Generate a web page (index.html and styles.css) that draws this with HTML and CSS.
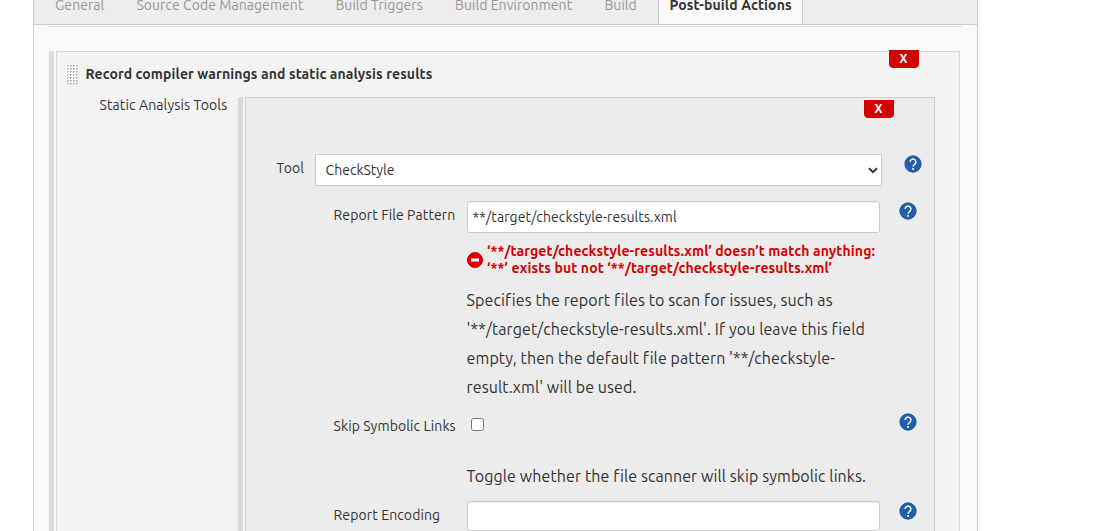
FILE: index.html
```html
<!DOCTYPE html>
<html lang="en">
<head>
<meta charset="utf-8">
<title>Post-build Actions</title>
<link rel="stylesheet" href="styles.css">
</head>
<body>
<svg class="defs" aria-hidden="true">
  <symbol id="help" viewBox="-0.5 -0.5 25 25">
    <circle cx="12" cy="12" r="12" fill="#235ea8"/>
    <path d="M8 9.2a4 4 0 1 1 6.6 3c-1.5 1.2-2.6 1.8-2.6 3.6" fill="none" stroke="#fff" stroke-width="2"/>
    <rect x="10.8" y="17.6" width="2.4" height="2.4" fill="#fff"/>
  </symbol>
</svg>
<main class="config">
  <nav class="tabs">
    <a class="tab t-general">General</a>
    <a class="tab t-scm">Source Code Management</a>
    <a class="tab t-triggers">Build Triggers</a>
    <a class="tab t-env">Build Environment</a>
    <a class="tab t-build">Build</a>
    <a class="tab active">Post-build Actions</a>
  </nav>
  <div class="rule"></div>
  <section class="chunk outer">
    <button class="delete">X</button>
    <header class="heading">
      <svg class="grip" width="12" height="21">
        <defs><pattern id="dots" width="3" height="3" patternUnits="userSpaceOnUse"><rect width="3" height="3" fill="#fff"/><path d="M1 1h2v1h-1v1h-1z" fill="#b5b5ad"/></pattern></defs>
        <rect width="12" height="21" fill="url(#dots)"/>
      </svg>
      <h2 class="title">Record compiler warnings and static analysis results</h2>
    </header>
    <div class="tools">
      <div class="tools-label">Static Analysis Tools</div>
      <section class="chunk inner">
        <button class="delete">X</button>
        <div class="row tool-row">
          <label class="label">Tool</label>
          <div class="select"><span>CheckStyle</span>
            <svg width="10" height="7" viewBox="0 0 10 7"><path d="M1 1.2L5 5.2L9 1.2" fill="none" stroke="#333" stroke-width="2"/></svg>
          </div>
          <svg class="help"><use href="#help"/></svg>
        </div>
        <div class="row pattern-row">
          <label class="label">Report File Pattern</label>
          <div class="input">**/target/checkstyle-results.xml</div>
          <svg class="help"><use href="#help"/></svg>
        </div>
        <div class="error">
          <svg width="16" height="16" viewBox="0 0 16 16"><circle cx="8" cy="8" r="7.5" fill="#de0008" stroke="#c40000"/><rect x="4" y="6.5" width="8" height="3" fill="#fff"/></svg>
          <p class="error-text">‘**/target/checkstyle-results.xml’ doesn’t match anything:<br>‘**’ exists but not ‘**/target/checkstyle-results.xml’</p>
        </div>
        <p class="description">Specifies the report files to scan for issues, such as<br>'**/target/checkstyle-results.xml'. If you leave this field<br>empty, then the default file pattern '**/checkstyle-<br>result.xml' will be used.</p>
        <div class="row skip-row">
          <label class="label">Skip Symbolic Links</label>
          <div class="check"><span class="box"></span></div>
          <svg class="help"><use href="#help"/></svg>
        </div>
        <p class="description toggle">Toggle whether the file scanner will skip symbolic links.</p>
        <div class="row encoding-row">
          <label class="label">Report Encoding</label>
          <div class="input short"></div>
          <svg class="help"><use href="#help"/></svg>
        </div>
      </section>
    </div>
  </section>
</main>
</body>
</html>
```
FILE: styles.css
```css
* { box-sizing: border-box; }
body { margin: 0; height: 531px; overflow: hidden; background: #fff; color: #333; font: 14px/20px Ubuntu, "Noto Sans", sans-serif; letter-spacing: 0.1px; }
.defs { position: absolute; width: 0; height: 0; }
p, h2 { margin: 0; }
.config { width: 945px; height: 531px; margin-left: 33px; border: solid #ccc; border-width: 0 1px; background: #f9f9f9; overflow: hidden; }
.tabs { display: flex; height: 25px; padding-left: 5px; background: #ededed; border-bottom: 1px solid #ccc; }
.tab { flex: none; height: 24px; padding: 0 16px; line-height: 10px; color: #999; white-space: nowrap; letter-spacing: 0.06px; }
.t-general { width: 81px; }
.t-scm { width: 199px; padding-left: 16.4px; }
.t-triggers { width: 120px; padding-left: 16.4px; }
.t-env { width: 149px; }
.t-build { width: 70px; padding-left: 16.4px; }
.tab.active { width: 145px; padding: 0 10.4px; border: solid #ccc; border-width: 0 1px; background: #f9f9f9; color: #333; font-weight: 700; letter-spacing: 0.11px; }
.rule { height: 1px; margin: 1px 15px 24px; background: #ddd; }
.chunk { position: relative; }
.chunk::before { content: ""; position: absolute; left: -8px; top: -1px; bottom: 0; width: 5px; background: #ddd; }
.outer { width: 904px; height: 500px; margin-left: 22px; border: 1px solid #d9d9d9; background: #f3f3f3; }
.inner { width: 690px; height: 460px; border: 1px solid #d0d0d0; background: #ececec; }
.inner::before { background: #d9d9d9; }
.delete { position: absolute; right: 40px; top: 2px; width: 30px; height: 18px; padding: 0 1px 0 0; border: 1px solid #c00; border-radius: 0 0 4px 4px; background: #d40000; color: #fff; font: 700 12px/16px Ubuntu, "Noto Sans", sans-serif; }
.outer > .delete { top: -2px; }
.heading { display: flex; height: 45px; padding: 12px 0 0 9px; gap: 7.5px; }
.title { font-size: 14px; line-height: 20px; letter-spacing: 0.11px; white-space: nowrap; }
.tools { display: flex; }
.tools-label { width: 188px; padding-left: 42.5px; line-height: 16px; letter-spacing: 0.12px; white-space: nowrap; }
.row { display: flex; align-items: flex-start; padding-left: 87px; white-space: nowrap; }
.label { width: 134px; padding: 4px 0 0 0.5px; letter-spacing: 0.12px; }
.help { width: 18px; height: 18px; margin: 1px 0 0 19px; }
.tool-row { padding: 56px 0 0 30px; }
.tool-row .label { width: 39px; }
.tool-row .help { margin-left: 22px; }
.select { display: flex; align-items: center; justify-content: space-between; width: 567px; height: 32px; padding: 0 3px 0 9.6px; border: 1px solid #ccc; background: #fff; letter-spacing: 0; }
.pattern-row { padding-top: 15px; }
.input { width: 413px; height: 32px; padding: 0 4.6px; border: 1px solid #ccc; border-radius: 3px; background: #fff; box-shadow: inset 0 1px 1px #eee; line-height: 30px; }
.short { height: 30px; }
.error { display: flex; align-items: center; gap: 4px; height: 34px; margin: 10px 0 0 221px; color: #d40000; white-space: nowrap; }
.error-text { font-weight: 700; line-height: 17px; letter-spacing: 0.12px; }
.description { margin: 9px 0 0 220.6px; font-size: 16px; line-height: 29px; letter-spacing: 0.09px; white-space: nowrap; }
.skip-row { padding-top: 10px; }
.check { width: 413px; padding: 6px 0 0 4px; }
.box { display: block; width: 13px; height: 13px; border: 1px solid #767676; border-radius: 2.5px; background: #fff; }
.toggle { margin-top: 26px; }
.encoding-row { padding-top: 10px; }
```
